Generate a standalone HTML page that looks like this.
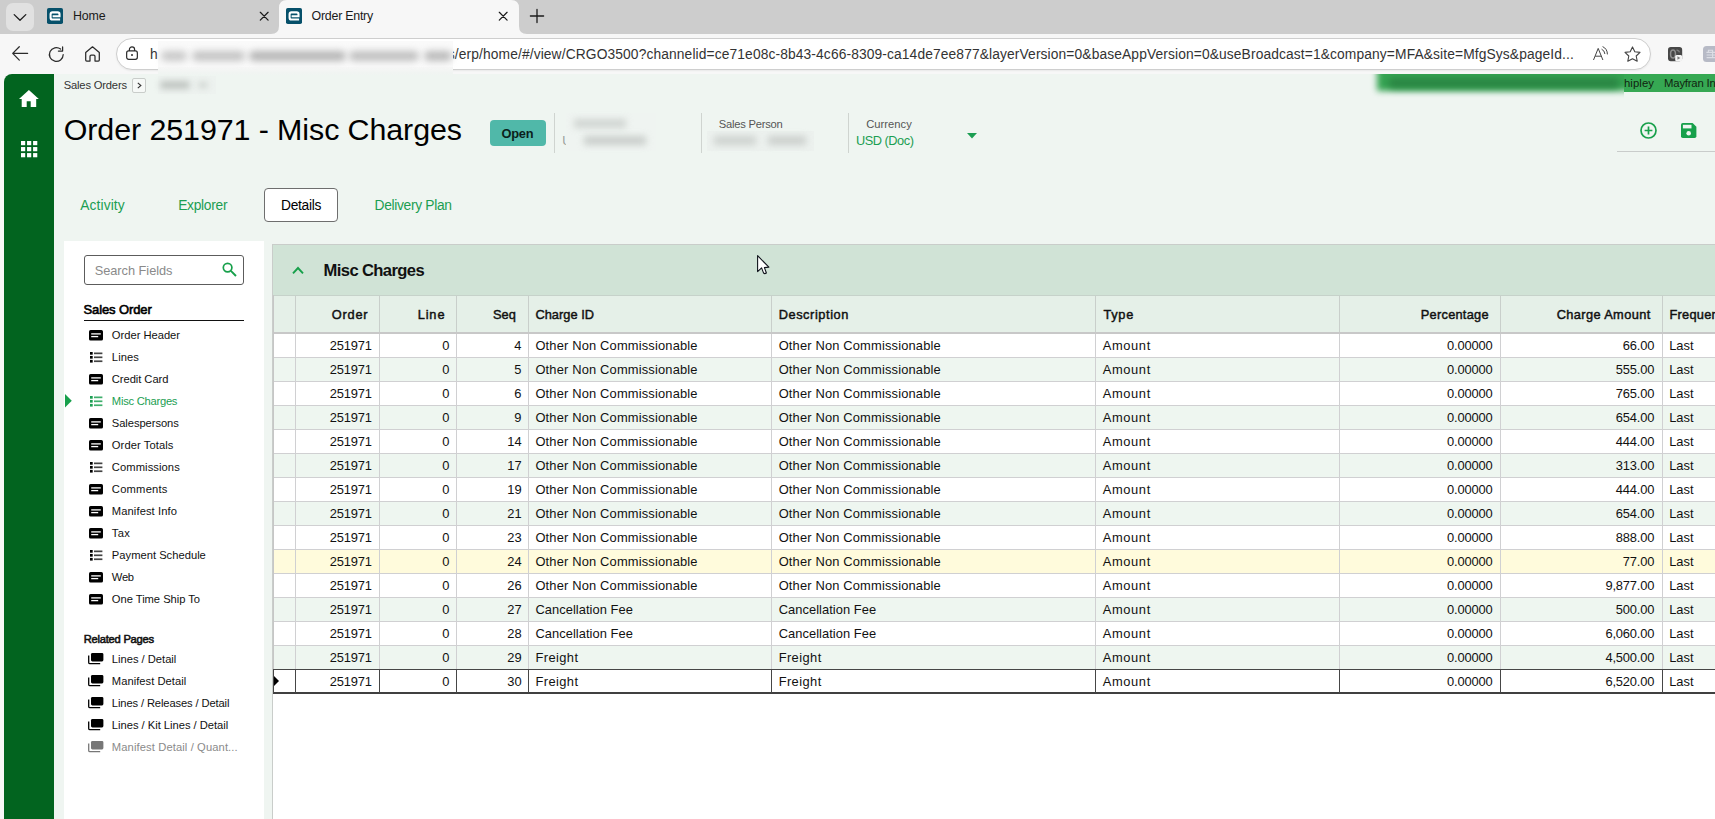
<!DOCTYPE html><html lang="en"><head><meta charset="utf-8"><title>Order Entry</title><style>
html,body{margin:0;padding:0}
body{width:1715px;height:819px;overflow:hidden;position:relative;background:#eff5f1;font-family:'Liberation Sans',sans-serif;color:#000}
.t{position:absolute;white-space:pre;line-height:1em}
.a{position:absolute}
svg{position:absolute;overflow:visible}
</style></head><body>
<div class="a" id="tabbar" style="left:0;top:0;width:1715px;height:34px;background:#cdcdcd"></div>
<div class="a" id="toolbar" style="left:0;top:34px;width:1715px;height:40px;background:#f7f7f7"></div>
<div class="a" style="left:0;top:74px;width:4px;height:745px;background:#f7f7f7"></div>
<div class="a" style="left:6px;top:3px;width:28px;height:28px;border-radius:7px;background:#e1e1e1"></div>
<svg style="left:13px;top:13px" width="14" height="9" viewBox="0 0 14 9"><path d="M1.2 1.6 L7 7.2 L12.8 1.6" fill="none" stroke="#1b1b1b" stroke-width="1.3" stroke-linecap="round" stroke-linejoin="round"/></svg>
<svg style="left:271px;top:0" width="256" height="34" viewBox="0 0 256 34"><path d="M0 34 Q8 34 8 26 L8 8 Q8 0 16 0 L240 0 Q248 0 248 8 L248 26 Q248 34 256 34 Z" fill="#f7f7f7"/></svg>
<svg style="left:47px;top:8px" width="16" height="16" viewBox="0 0 16 16"><rect width="16" height="16" rx="1.8" fill="#06506a"/><path d="M5.6 8.2 H12.5 V6.2 Q12.5 4.4 10.7 4.4 H5.4 Q3.6 4.4 3.6 6.2 V9.7 Q3.6 11.5 5.4 11.5 H13.1" fill="none" stroke="#fff" stroke-width="2.1"/></svg>
<svg style="left:286px;top:8px" width="16" height="16" viewBox="0 0 16 16"><rect width="16" height="16" rx="1.8" fill="#06506a"/><path d="M5.6 8.2 H12.5 V6.2 Q12.5 4.4 10.7 4.4 H5.4 Q3.6 4.4 3.6 6.2 V9.7 Q3.6 11.5 5.4 11.5 H13.1" fill="none" stroke="#fff" stroke-width="2.1"/></svg>
<span class="t" style="left:72.96px;top:10.20px;font-size:12.4px;color:#1a1a1a;letter-spacing:-0.107px;">Home</span>
<span class="t" style="left:311.56px;top:10.10px;font-size:12.4px;color:#1a1a1a;letter-spacing:-0.241px;">Order Entry</span>
<svg style="left:260.3px;top:12.2px" width="8.4" height="8.4" viewBox="0 0 8.4 8.4"><path d="M0.3 0.3 L8.1 8.1 M8.1 0.3 L0.3 8.1" stroke="#1b1b1b" stroke-width="1.25" stroke-linecap="round"/></svg>
<svg style="left:499.40000000000003px;top:12.2px" width="8.4" height="8.4" viewBox="0 0 8.4 8.4"><path d="M0.3 0.3 L8.1 8.1 M8.1 0.3 L0.3 8.1" stroke="#1b1b1b" stroke-width="1.25" stroke-linecap="round"/></svg>
<svg style="left:529.5px;top:8.7px" width="14" height="14" viewBox="0 0 14 14"><path d="M7 0.4 V13.6 M0.4 7 H13.6" stroke="#1b1b1b" stroke-width="1.3" stroke-linecap="round"/></svg>
<svg style="left:12px;top:46px" width="16" height="15" viewBox="0 0 16 15"><path d="M7.3 0.7 L0.7 7.4 L7.3 14.1 M0.9 7.4 H15.6" fill="none" stroke="#2b2b2b" stroke-width="1.25" stroke-linecap="round" stroke-linejoin="round"/></svg>
<svg style="left:47.5px;top:45.5px" width="17" height="17" viewBox="0 0 17 17"><path d="M15.2 8.5 A6.9 6.9 0 1 1 12.6 3.1 M14.6 0.9 V5.1 H10.4" fill="none" stroke="#2b2b2b" stroke-width="1.25" stroke-linecap="round" stroke-linejoin="round"/></svg>
<svg style="left:84.5px;top:45.6px" width="15" height="16" viewBox="0 0 15 16"><path d="M0.7 6.6 L7.5 0.8 L14.3 6.6 V14 Q14.3 15 13.3 15 H10 V10.4 Q10 9.2 8.8 9.2 H6.2 Q5 9.2 5 10.4 V15 H1.7 Q0.7 15 0.7 14 Z" fill="none" stroke="#2b2b2b" stroke-width="1.25" stroke-linejoin="round"/></svg>
<div class="a" id="omnibox" style="left:116px;top:38px;width:1535px;height:32px;box-sizing:border-box;border:1px solid #cecece;border-radius:16px;background:#fff;box-shadow:0 1px 2px rgba(0,0,0,.06)"></div>
<svg style="left:126px;top:46px" width="12" height="14" viewBox="0 0 12 14"><rect x="0.65" y="4.9" width="10.7" height="8.4" rx="2" fill="none" stroke="#2b2b2b" stroke-width="1.2"/><path d="M3.4 4.9 V3.4 A2.6 2.6 0 0 1 8.6 3.4 V4.9" fill="none" stroke="#2b2b2b" stroke-width="1.2"/><circle cx="6" cy="9.1" r="1" fill="#2b2b2b"/></svg>
<span class="t" style="left:149.97px;top:47.92px;font-size:13.8px;color:#333;">h</span>
<span class="t" style="left:447.77px;top:47.92px;font-size:13.8px;color:#333;letter-spacing:0.116px;">s/erp/home/#/view/CRGO3500?channelid=ce71e08c-8b43-4c66-8309-ca14de7ee877&amp;layerVersion=0&amp;baseAppVersion=0&amp;useBroadcast=1&amp;company=MFA&amp;site=MfgSys&amp;pageId...</span>
<div class="a" style="left:158px;top:41px;width:295px;height:28px;background:#fafafa"></div>
<div class="a" style="left:158px;top:67px;width:295px;height:9px;background:linear-gradient(#f7f7f7,#f1f4f2 60%,#eff5f1)"></div>
<div class="a" style="left:161px;top:50.5px;width:26px;height:10px;border-radius:5px;background:#c9c9c9;filter:blur(3.5px)"></div>
<div class="a" style="left:192px;top:50.5px;width:53px;height:10px;border-radius:5px;background:#c4c4c4;filter:blur(3.5px)"></div>
<div class="a" style="left:249px;top:50.5px;width:97px;height:10px;border-radius:5px;background:#b6b6b6;filter:blur(3.5px)"></div>
<div class="a" style="left:349px;top:50.5px;width:70px;height:10px;border-radius:5px;background:#c0c0c0;filter:blur(3.5px)"></div>
<div class="a" style="left:424px;top:50.5px;width:28px;height:10px;border-radius:5px;background:#bbbbbb;filter:blur(3.5px)"></div>
<svg style="left:1593px;top:46px" width="16" height="15" viewBox="0 0 16 15"><path d="M0.5 14 L5.2 2.4 L9.9 14 M2.2 10.2 H8.2" fill="none" stroke="#444" stroke-width="1" stroke-linejoin="round"/><path d="M8.6 3.2 Q11.6 4.6 11.9 8 M9.6 0.6 Q14.4 2.8 14.4 8.4" fill="none" stroke="#444" stroke-width="1"/></svg>
<svg style="left:1623.9px;top:46px" width="17" height="16" viewBox="0 0 17 16"><path d="M8.5 0.9 L10.8 5.7 L16 6.4 L12.2 10 L13.2 15.2 L8.5 12.7 L3.8 15.2 L4.8 10 L1 6.4 L6.2 5.7 Z" fill="none" stroke="#444" stroke-width="1.1" stroke-linejoin="round"/></svg>
<svg style="left:1667.9px;top:46.9px" width="14.2" height="14.2" viewBox="0 0 15 15"><rect width="15" height="15" rx="3" fill="#474747"/><ellipse cx="5.3" cy="7.4" rx="2.6" ry="4.2" fill="none" stroke="#8e8e8e" stroke-width="1.6"/><path d="M9 3.4 Q11.6 3 12.2 5.6" fill="none" stroke="#7c7c7c" stroke-width="1.5"/><rect x="7.6" y="8.4" width="7.4" height="6.6" rx="1.6" fill="#f4f4f4"/><path d="M10 9.8 L13 11.6 L10 13.4Z" fill="#7a7a7a"/></svg>
<svg style="left:1703px;top:46px" width="12" height="16" viewBox="0 0 12 16"><path d="M12 0 H3.5 Q0 0 0 3.5 V12.5 Q0 16 3.5 16 H12Z" fill="#b7bac6"/><path d="M5.4 6.2 V4.2 H9.6 V6.2 M3.4 6.4 H12 M3.6 9 H12 M3.6 11.6 H12 M9.6 6.4 V11.6" stroke="#dcdee5" stroke-width="1.1" fill="none"/></svg>
<div class="a" style="left:4px;top:74px;width:9px;height:9px;background:#f7f7f7"></div>
<div class="a" id="sidebar" style="left:4px;top:74px;width:50px;height:745px;background:#02641f;border-top-left-radius:8px"></div>
<svg style="left:19.2px;top:89.9px" width="19.8" height="17" viewBox="0 0 19.8 17"><path d="M9.9 0 L0 9 H2.7 V17 H7.7 V11.3 H11.7 V17 H17.2 V9 H19.8 Z" fill="#fff"/></svg>
<svg style="left:20.8px;top:141px" width="16.3" height="16.3" viewBox="0 0 16.3 16.3"><rect x="0.00" y="0.00" width="4.2" height="4.2" fill="#fff"/><rect x="0.00" y="6.04" width="4.2" height="4.2" fill="#fff"/><rect x="0.00" y="12.08" width="4.2" height="4.2" fill="#fff"/><rect x="6.04" y="0.00" width="4.2" height="4.2" fill="#fff"/><rect x="6.04" y="6.04" width="4.2" height="4.2" fill="#fff"/><rect x="6.04" y="12.08" width="4.2" height="4.2" fill="#fff"/><rect x="12.08" y="0.00" width="4.2" height="4.2" fill="#fff"/><rect x="12.08" y="6.04" width="4.2" height="4.2" fill="#fff"/><rect x="12.08" y="12.08" width="4.2" height="4.2" fill="#fff"/></svg>
<span class="t" style="left:63.73px;top:80.22px;font-size:11.2px;color:#333;letter-spacing:-0.180px;">Sales Orders</span>
<div class="a" style="left:132px;top:78px;width:14px;height:15px;box-sizing:border-box;border:1px solid #c9cdca;border-radius:2px;background:#f6f9f7"></div>
<svg style="left:136.6px;top:82.4px" width="5" height="7" viewBox="0 0 5 7"><path d="M0.8 0.8 L3.9 3.5 L0.8 6.2" fill="none" stroke="#333" stroke-width="1.1"/></svg>
<div class="a" style="left:158px;top:76px;width:58px;height:18px;background:#edf2ef"></div>
<div class="a" style="left:160px;top:80.5px;width:30px;height:8px;border-radius:4px;background:#bfc4c0;filter:blur(3.2px)"></div>
<div class="a" style="left:198px;top:82px;width:10px;height:6px;border-radius:3px;background:#cfd4d0;filter:blur(3px)"></div>
<div class="a" id="banner" style="left:1624px;top:74px;width:91px;height:18px;background:#36a853"></div>
<div class="a" style="left:1366px;top:74px;width:258px;height:28px;overflow:hidden"><div class="a" style="left:11px;top:-8px;width:270px;height:25px;background:#35a452;filter:blur(3px)"></div><div class="a" style="left:22px;top:4px;width:232px;height:10px;border-radius:5px;background:#2a8443;filter:blur(3.5px)"></div></div>
<span class="t" style="left:1623.92px;top:78.03px;font-size:11.3px;color:#10230f;letter-spacing:0.100px;">hipley</span>
<span class="t" style="left:1664.12px;top:78.03px;font-size:11.3px;color:#10230f;letter-spacing:-0.2px;">Mayfran Inc</span>
<span class="t" style="left:63.78px;top:113.97px;font-size:30.4px;letter-spacing:-0.080px;">Order 251971 - Misc Charges</span>
<div class="a" style="left:490px;top:120px;width:56px;height:26px;border-radius:4px;background:#50b8a9"></div>
<span class="t" style="left:501.53px;top:128.16px;font-size:12.8px;font-weight:700;color:#0b1f1c;letter-spacing:-0.246px;">Open</span>
<div class="a" style="left:554px;top:113px;width:1px;height:40px;background:#cfd4d0"></div>
<div class="a" style="left:701px;top:113px;width:1px;height:40px;background:#cfd4d0"></div>
<div class="a" style="left:848px;top:113px;width:1px;height:40px;background:#cfd4d0"></div>
<span class="t" style="left:562.25px;top:135.22px;font-size:12.5px;color:#9aa09c;">U</span>
<div class="a" style="left:566px;top:113px;width:90px;height:38px;background:#eff4f1"></div>
<div class="a" style="left:574px;top:119px;width:52px;height:9px;background:#c9cdca;filter:blur(3.5px);opacity:.8"></div>
<div class="a" style="left:584px;top:136px;width:62px;height:9px;background:#c3c7c4;filter:blur(3.5px);opacity:.85"></div>
<span class="t" style="left:718.83px;top:119.32px;font-size:11.2px;color:#555;letter-spacing:-0.230px;">Sales Person</span>
<div class="a" style="left:707px;top:131px;width:107px;height:20px;background:#ecf1ee"></div>
<div class="a" style="left:714px;top:136px;width:42px;height:9px;background:#c9cdca;filter:blur(3.5px);opacity:.85"></div>
<div class="a" style="left:768px;top:136px;width:38px;height:9px;background:#c6cac7;filter:blur(3.5px);opacity:.85"></div>
<span class="t" style="left:866.13px;top:119.32px;font-size:11.2px;color:#555;letter-spacing:0.047px;">Currency</span>
<span class="t" style="left:856.03px;top:134.96px;font-size:12.8px;color:#1b9e52;letter-spacing:-0.497px;">USD (Doc)</span>
<svg style="left:966.5px;top:133px" width="10" height="5.4" viewBox="0 0 10 5.4"><path d="M0 0 H10 L5 5.4Z" fill="#1b9e52"/></svg>
<svg style="left:1640.3px;top:122px" width="17" height="17" viewBox="0 0 17 17"><circle cx="8.5" cy="8.5" r="7.5" fill="none" stroke="#17a04b" stroke-width="1.7"/><path d="M8.5 4.6 V12.4 M4.6 8.5 H12.4" stroke="#17a04b" stroke-width="1.7"/></svg>
<svg style="left:1681.3px;top:123.2px" width="15.4" height="15" viewBox="0 0 15.4 15"><path d="M1.8 0 H11.6 L15.4 3.8 V13.2 Q15.4 15 13.6 15 H1.8 Q0 15 0 13.2 V1.8 Q0 0 1.8 0Z" fill="#17a04b"/><rect x="1.9" y="1.8" width="8.6" height="3.6" fill="#eff5f1"/><circle cx="7.7" cy="10.2" r="2.3" fill="#eff5f1"/></svg>
<div class="a" style="left:1617px;top:151px;width:98px;height:1px;background:#c9cccb"></div>
<span class="t" style="left:80.17px;top:199.12px;font-size:13.8px;color:#1b9e52;letter-spacing:0.125px;">Activity</span>
<span class="t" style="left:178.17px;top:199.12px;font-size:13.8px;color:#1b9e52;letter-spacing:-0.285px;">Explorer</span>
<div class="a" style="left:264px;top:188px;width:74px;height:34px;box-sizing:border-box;border:1px solid #6e6e6e;border-radius:4px;background:#fff"></div>
<span class="t" style="left:280.97px;top:199.12px;font-size:13.8px;letter-spacing:-0.301px;">Details</span>
<span class="t" style="left:374.57px;top:199.12px;font-size:13.8px;color:#1b9e52;letter-spacing:-0.325px;">Delivery Plan</span>
<div class="a" id="nav" style="left:64px;top:241px;width:200px;height:578px;background:#fff"></div>
<div class="a" style="left:84px;top:255px;width:160px;height:30px;box-sizing:border-box;border:1px solid #5c5c5c;border-radius:3px;background:#fff"></div>
<span class="t" style="left:94.73px;top:264.56px;font-size:12.8px;color:#8a8a8a;letter-spacing:-0.039px;">Search Fields</span>
<svg style="left:222px;top:261.6px" width="15" height="15" viewBox="0 0 15 15"><circle cx="5.6" cy="5.6" r="4.3" fill="none" stroke="#17a04b" stroke-width="1.7"/><path d="M8.9 8.9 L14 14" stroke="#17a04b" stroke-width="1.9"/></svg>
<span class="t" style="left:83.52px;top:303.00px;font-size:13px;letter-spacing:-0.107px;-webkit-text-stroke:0.6px #000;">Sales Order</span>
<div class="a" style="left:84px;top:319.6px;width:160px;height:1.4px;background:#111"></div>
<svg style="left:89.1px;top:329.7px" width="14" height="10.6" viewBox="0 0 14 10.6"><rect width="14" height="10.6" rx="1.6" fill="#000"/><path d="M2.2 3.9 H11.8" stroke="#fff" stroke-width="1.3"/><path d="M2.2 6.6 H9.2" stroke="#fff" stroke-width="1.3"/></svg>
<span class="t" style="left:111.83px;top:330.12px;font-size:11.2px;color:#111;letter-spacing:-0.017px;">Order Header</span>
<svg style="left:89.9px;top:351.8px" width="12.4" height="10.6" viewBox="0 0 12.4 10.6"><rect x="0" y="0.00" width="2.7" height="2.7" fill="#000"/><rect x="4" y="0.50" width="8.4" height="1.7" fill="#444"/><rect x="0" y="3.95" width="2.7" height="2.7" fill="#000"/><rect x="4" y="4.45" width="8.4" height="1.7" fill="#444"/><rect x="0" y="7.90" width="2.7" height="2.7" fill="#000"/><rect x="4" y="8.40" width="8.4" height="1.7" fill="#444"/></svg>
<span class="t" style="left:111.83px;top:352.12px;font-size:11.2px;color:#111;letter-spacing:0.093px;">Lines</span>
<svg style="left:89.1px;top:373.7px" width="14" height="10.6" viewBox="0 0 14 10.6"><rect width="14" height="10.6" rx="1.6" fill="#000"/><path d="M2.2 3.9 H11.8" stroke="#fff" stroke-width="1.3"/><path d="M2.2 6.6 H9.2" stroke="#fff" stroke-width="1.3"/></svg>
<span class="t" style="left:111.83px;top:374.12px;font-size:11.2px;color:#111;letter-spacing:-0.058px;">Credit Card</span>
<svg style="left:89.9px;top:395.8px" width="12.4" height="10.6" viewBox="0 0 12.4 10.6"><rect x="0" y="0.00" width="2.7" height="2.7" fill="#1b9e52"/><rect x="4" y="0.50" width="8.4" height="1.7" fill="#3fae6c"/><rect x="0" y="3.95" width="2.7" height="2.7" fill="#1b9e52"/><rect x="4" y="4.45" width="8.4" height="1.7" fill="#3fae6c"/><rect x="0" y="7.90" width="2.7" height="2.7" fill="#1b9e52"/><rect x="4" y="8.40" width="8.4" height="1.7" fill="#3fae6c"/></svg>
<span class="t" style="left:111.83px;top:396.12px;font-size:11.2px;color:#1b9e52;letter-spacing:-0.252px;">Misc Charges</span>
<svg style="left:89.1px;top:417.7px" width="14" height="10.6" viewBox="0 0 14 10.6"><rect width="14" height="10.6" rx="1.6" fill="#000"/><path d="M2.2 3.9 H11.8" stroke="#fff" stroke-width="1.3"/><path d="M2.2 6.6 H9.2" stroke="#fff" stroke-width="1.3"/></svg>
<span class="t" style="left:111.83px;top:418.12px;font-size:11.2px;color:#111;letter-spacing:-0.071px;">Salespersons</span>
<svg style="left:89.1px;top:439.7px" width="14" height="10.6" viewBox="0 0 14 10.6"><rect width="14" height="10.6" rx="1.6" fill="#000"/><path d="M2.2 3.9 H11.8" stroke="#fff" stroke-width="1.3"/><path d="M2.2 6.6 H9.2" stroke="#fff" stroke-width="1.3"/></svg>
<span class="t" style="left:111.83px;top:440.12px;font-size:11.2px;color:#111;letter-spacing:0.081px;">Order Totals</span>
<svg style="left:89.9px;top:461.8px" width="12.4" height="10.6" viewBox="0 0 12.4 10.6"><rect x="0" y="0.00" width="2.7" height="2.7" fill="#000"/><rect x="4" y="0.50" width="8.4" height="1.7" fill="#444"/><rect x="0" y="3.95" width="2.7" height="2.7" fill="#000"/><rect x="4" y="4.45" width="8.4" height="1.7" fill="#444"/><rect x="0" y="7.90" width="2.7" height="2.7" fill="#000"/><rect x="4" y="8.40" width="8.4" height="1.7" fill="#444"/></svg>
<span class="t" style="left:111.83px;top:462.12px;font-size:11.2px;color:#111;letter-spacing:0.078px;">Commissions</span>
<svg style="left:89.1px;top:483.7px" width="14" height="10.6" viewBox="0 0 14 10.6"><rect width="14" height="10.6" rx="1.6" fill="#000"/><path d="M2.2 3.9 H11.8" stroke="#fff" stroke-width="1.3"/><path d="M2.2 6.6 H9.2" stroke="#fff" stroke-width="1.3"/></svg>
<span class="t" style="left:111.83px;top:484.12px;font-size:11.2px;color:#111;letter-spacing:0.218px;">Comments</span>
<svg style="left:89.1px;top:505.7px" width="14" height="10.6" viewBox="0 0 14 10.6"><rect width="14" height="10.6" rx="1.6" fill="#000"/><path d="M2.2 3.9 H11.8" stroke="#fff" stroke-width="1.3"/><path d="M2.2 6.6 H9.2" stroke="#fff" stroke-width="1.3"/></svg>
<span class="t" style="left:111.83px;top:506.12px;font-size:11.2px;color:#111;letter-spacing:0.088px;">Manifest Info</span>
<svg style="left:89.1px;top:527.7px" width="14" height="10.6" viewBox="0 0 14 10.6"><rect width="14" height="10.6" rx="1.6" fill="#000"/><path d="M2.2 3.9 H11.8" stroke="#fff" stroke-width="1.3"/><path d="M2.2 6.6 H9.2" stroke="#fff" stroke-width="1.3"/></svg>
<span class="t" style="left:111.83px;top:528.12px;font-size:11.2px;color:#111;letter-spacing:0.349px;">Tax</span>
<svg style="left:89.9px;top:549.8px" width="12.4" height="10.6" viewBox="0 0 12.4 10.6"><rect x="0" y="0.00" width="2.7" height="2.7" fill="#000"/><rect x="4" y="0.50" width="8.4" height="1.7" fill="#444"/><rect x="0" y="3.95" width="2.7" height="2.7" fill="#000"/><rect x="4" y="4.45" width="8.4" height="1.7" fill="#444"/><rect x="0" y="7.90" width="2.7" height="2.7" fill="#000"/><rect x="4" y="8.40" width="8.4" height="1.7" fill="#444"/></svg>
<span class="t" style="left:111.83px;top:550.12px;font-size:11.2px;color:#111;letter-spacing:0.007px;">Payment Schedule</span>
<svg style="left:89.1px;top:571.7px" width="14" height="10.6" viewBox="0 0 14 10.6"><rect width="14" height="10.6" rx="1.6" fill="#000"/><path d="M2.2 3.9 H11.8" stroke="#fff" stroke-width="1.3"/><path d="M2.2 6.6 H9.2" stroke="#fff" stroke-width="1.3"/></svg>
<span class="t" style="left:111.83px;top:572.12px;font-size:11.2px;color:#111;letter-spacing:-0.296px;">Web</span>
<svg style="left:89.1px;top:593.7px" width="14" height="10.6" viewBox="0 0 14 10.6"><rect width="14" height="10.6" rx="1.6" fill="#000"/><path d="M2.2 3.9 H11.8" stroke="#fff" stroke-width="1.3"/><path d="M2.2 6.6 H9.2" stroke="#fff" stroke-width="1.3"/></svg>
<span class="t" style="left:111.83px;top:594.12px;font-size:11.2px;color:#111;letter-spacing:-0.033px;">One Time Ship To</span>
<svg style="left:65.2px;top:394.3px" width="6.8" height="13.4" viewBox="0 0 6.8 13.4"><path d="M0 0 L6.8 6.7 L0 13.4Z" fill="#17a04b"/></svg>
<span class="t" style="left:83.73px;top:634.12px;font-size:11.2px;color:#111;letter-spacing:-0.249px;-webkit-text-stroke:0.55px #111;">Related Pages</span>
<svg style="left:88.4px;top:653.3px" width="15.4" height="11.4" viewBox="0 0 15.4 11.4"><rect x="3" y="0" width="12.4" height="8.4" rx="1.4" fill="#000"/><path d="M0.7 2.6 V9.4 Q0.7 10.7 2 10.7 H12.2" fill="none" stroke="#000" stroke-width="1.3"/></svg>
<span class="t" style="left:111.83px;top:654.02px;font-size:11.2px;color:#111;letter-spacing:-0.013px;">Lines / Detail</span>
<svg style="left:88.4px;top:675.3px" width="15.4" height="11.4" viewBox="0 0 15.4 11.4"><rect x="3" y="0" width="12.4" height="8.4" rx="1.4" fill="#000"/><path d="M0.7 2.6 V9.4 Q0.7 10.7 2 10.7 H12.2" fill="none" stroke="#000" stroke-width="1.3"/></svg>
<span class="t" style="left:111.83px;top:676.02px;font-size:11.2px;color:#111;letter-spacing:0.030px;">Manifest Detail</span>
<svg style="left:88.4px;top:697.3px" width="15.4" height="11.4" viewBox="0 0 15.4 11.4"><rect x="3" y="0" width="12.4" height="8.4" rx="1.4" fill="#000"/><path d="M0.7 2.6 V9.4 Q0.7 10.7 2 10.7 H12.2" fill="none" stroke="#000" stroke-width="1.3"/></svg>
<span class="t" style="left:111.83px;top:698.02px;font-size:11.2px;color:#111;letter-spacing:-0.126px;">Lines / Releases / Detail</span>
<svg style="left:88.4px;top:719.3px" width="15.4" height="11.4" viewBox="0 0 15.4 11.4"><rect x="3" y="0" width="12.4" height="8.4" rx="1.4" fill="#000"/><path d="M0.7 2.6 V9.4 Q0.7 10.7 2 10.7 H12.2" fill="none" stroke="#000" stroke-width="1.3"/></svg>
<span class="t" style="left:111.83px;top:720.02px;font-size:11.2px;color:#111;letter-spacing:-0.019px;">Lines / Kit Lines / Detail</span>
<svg style="left:88.4px;top:741.3px" width="15.4" height="11.4" viewBox="0 0 15.4 11.4"><rect x="3" y="0" width="12.4" height="8.4" rx="1.4" fill="#777"/><path d="M0.7 2.6 V9.4 Q0.7 10.7 2 10.7 H12.2" fill="none" stroke="#777" stroke-width="1.3"/></svg>
<span class="t" style="left:111.83px;top:742.02px;font-size:11.2px;color:#8a8a8a;letter-spacing:0.108px;">Manifest Detail / Quant...</span>
<div class="a" id="card" style="left:272px;top:244px;width:1443px;height:575px;background:#fff;border-left:1px solid #c9cdca;border-top:1px solid #c9cdca;box-sizing:border-box"></div>
<div class="a" style="left:273px;top:245px;width:1442px;height:50px;background:#d0e3d6"></div>
<svg style="left:292px;top:266px" width="12" height="8.6" viewBox="0 0 12 8.6"><path d="M1 7.4 L6 2 L11 7.4" fill="none" stroke="#17a04b" stroke-width="1.9"/></svg>
<span class="t" style="left:323.60px;top:263.15px;font-size:16.6px;font-weight:700;color:#111;letter-spacing:-0.622px;">Misc Charges</span>
<div class="a" style="left:273px;top:295px;width:1442px;height:38px;background:#e5f0e8;border-top:1px solid #c6d2ca;box-sizing:border-box"></div>
<div class="a" style="left:273px;top:332px;width:1442px;height:2px;background:#c8c8c8"></div>
<div class="a" style="left:273px;top:334px;width:1442px;height:23px;background:#fff"></div>
<div class="a" style="left:273px;top:357px;width:1442px;height:1px;background:#d0d0d2"></div>
<div class="a" style="left:273px;top:358px;width:1442px;height:23px;background:#eef6f0"></div>
<div class="a" style="left:273px;top:381px;width:1442px;height:1px;background:#d0d0d2"></div>
<div class="a" style="left:273px;top:382px;width:1442px;height:23px;background:#fff"></div>
<div class="a" style="left:273px;top:405px;width:1442px;height:1px;background:#d0d0d2"></div>
<div class="a" style="left:273px;top:406px;width:1442px;height:23px;background:#eef6f0"></div>
<div class="a" style="left:273px;top:429px;width:1442px;height:1px;background:#d0d0d2"></div>
<div class="a" style="left:273px;top:430px;width:1442px;height:23px;background:#fff"></div>
<div class="a" style="left:273px;top:453px;width:1442px;height:1px;background:#d0d0d2"></div>
<div class="a" style="left:273px;top:454px;width:1442px;height:23px;background:#eef6f0"></div>
<div class="a" style="left:273px;top:477px;width:1442px;height:1px;background:#d0d0d2"></div>
<div class="a" style="left:273px;top:478px;width:1442px;height:23px;background:#fff"></div>
<div class="a" style="left:273px;top:501px;width:1442px;height:1px;background:#d0d0d2"></div>
<div class="a" style="left:273px;top:502px;width:1442px;height:23px;background:#eef6f0"></div>
<div class="a" style="left:273px;top:525px;width:1442px;height:1px;background:#d0d0d2"></div>
<div class="a" style="left:273px;top:526px;width:1442px;height:23px;background:#fff"></div>
<div class="a" style="left:273px;top:549px;width:1442px;height:1px;background:#d0d0d2"></div>
<div class="a" style="left:273px;top:550px;width:1442px;height:23px;background:#fffbdc"></div>
<div class="a" style="left:273px;top:573px;width:1442px;height:1px;background:#d0d0d2"></div>
<div class="a" style="left:273px;top:574px;width:1442px;height:23px;background:#fff"></div>
<div class="a" style="left:273px;top:597px;width:1442px;height:1px;background:#d0d0d2"></div>
<div class="a" style="left:273px;top:598px;width:1442px;height:23px;background:#eef6f0"></div>
<div class="a" style="left:273px;top:621px;width:1442px;height:1px;background:#d0d0d2"></div>
<div class="a" style="left:273px;top:622px;width:1442px;height:23px;background:#fff"></div>
<div class="a" style="left:273px;top:645px;width:1442px;height:1px;background:#d0d0d2"></div>
<div class="a" style="left:273px;top:646px;width:1442px;height:23px;background:#eef6f0"></div>
<div class="a" style="left:273px;top:669px;width:1442px;height:1px;background:#d0d0d2"></div>
<div class="a" style="left:273px;top:670px;width:1442px;height:23px;background:#fff"></div>
<div class="a" style="left:295px;top:296px;width:1px;height:36px;background:#c9cfcb"></div>
<div class="a" style="left:295px;top:334px;width:1px;height:336px;background:#d0d0d2"></div>
<div class="a" style="left:379px;top:296px;width:1px;height:36px;background:#c9cfcb"></div>
<div class="a" style="left:379px;top:334px;width:1px;height:336px;background:#d0d0d2"></div>
<div class="a" style="left:456px;top:296px;width:1px;height:36px;background:#c9cfcb"></div>
<div class="a" style="left:456px;top:334px;width:1px;height:336px;background:#d0d0d2"></div>
<div class="a" style="left:528px;top:296px;width:1px;height:36px;background:#c9cfcb"></div>
<div class="a" style="left:528px;top:334px;width:1px;height:336px;background:#d0d0d2"></div>
<div class="a" style="left:771px;top:296px;width:1px;height:36px;background:#c9cfcb"></div>
<div class="a" style="left:771px;top:334px;width:1px;height:336px;background:#d0d0d2"></div>
<div class="a" style="left:1095px;top:296px;width:1px;height:36px;background:#c9cfcb"></div>
<div class="a" style="left:1095px;top:334px;width:1px;height:336px;background:#d0d0d2"></div>
<div class="a" style="left:1339px;top:296px;width:1px;height:36px;background:#c9cfcb"></div>
<div class="a" style="left:1339px;top:334px;width:1px;height:336px;background:#d0d0d2"></div>
<div class="a" style="left:1500px;top:296px;width:1px;height:36px;background:#c9cfcb"></div>
<div class="a" style="left:1500px;top:334px;width:1px;height:336px;background:#d0d0d2"></div>
<div class="a" style="left:1662px;top:296px;width:1px;height:36px;background:#c9cfcb"></div>
<div class="a" style="left:1662px;top:334px;width:1px;height:336px;background:#d0d0d2"></div>
<div class="a" style="left:273px;top:295px;width:1px;height:375px;background:#c6c6c6"></div>
<div class="a" style="left:273px;top:669px;width:1442px;height:1px;background:#464646"></div>
<div class="a" style="left:273px;top:692px;width:1442px;height:2px;background:#404040"></div>
<div class="a" style="left:273px;top:669px;width:1px;height:24px;background:#464646"></div>
<div class="a" style="left:295px;top:669px;width:1px;height:24px;background:#464646"></div>
<div class="a" style="left:379px;top:669px;width:1px;height:24px;background:#464646"></div>
<div class="a" style="left:456px;top:669px;width:1px;height:24px;background:#464646"></div>
<div class="a" style="left:528px;top:669px;width:1px;height:24px;background:#464646"></div>
<div class="a" style="left:771px;top:669px;width:1px;height:24px;background:#464646"></div>
<div class="a" style="left:1095px;top:669px;width:1px;height:24px;background:#464646"></div>
<div class="a" style="left:1339px;top:669px;width:1px;height:24px;background:#464646"></div>
<div class="a" style="left:1500px;top:669px;width:1px;height:24px;background:#464646"></div>
<div class="a" style="left:1662px;top:669px;width:1px;height:24px;background:#464646"></div>
<svg style="left:274px;top:676.2px" width="5" height="10" viewBox="0 0 5 10"><path d="M0 0 L5 5 L0 10Z" fill="#000"/></svg>
<span class="t" style="left:331.83px;top:309.06px;font-size:12.8px;color:#111;letter-spacing:0.740px;-webkit-text-stroke:0.45px #111;">Order</span>
<span class="t" style="left:417.63px;top:309.06px;font-size:12.8px;color:#111;letter-spacing:0.892px;-webkit-text-stroke:0.45px #111;">Line</span>
<span class="t" style="left:493.03px;top:309.06px;font-size:12.8px;color:#111;letter-spacing:0.049px;-webkit-text-stroke:0.45px #111;">Seq</span>
<span class="t" style="left:535.43px;top:309.06px;font-size:12.8px;color:#111;letter-spacing:0.031px;-webkit-text-stroke:0.45px #111;">Charge ID</span>
<span class="t" style="left:778.63px;top:309.06px;font-size:12.8px;color:#111;letter-spacing:0.576px;-webkit-text-stroke:0.45px #111;">Description</span>
<span class="t" style="left:1103.43px;top:309.06px;font-size:12.8px;color:#111;letter-spacing:0.710px;-webkit-text-stroke:0.45px #111;">Type</span>
<span class="t" style="left:1420.83px;top:309.06px;font-size:12.8px;color:#111;letter-spacing:0.247px;-webkit-text-stroke:0.45px #111;">Percentage</span>
<span class="t" style="left:1556.73px;top:309.06px;font-size:12.8px;color:#111;letter-spacing:0.379px;-webkit-text-stroke:0.45px #111;">Charge Amount</span>
<span class="t" style="left:1669.53px;top:309.06px;font-size:12.8px;color:#111;letter-spacing:0.251px;-webkit-text-stroke:0.45px #111;">Frequency</span>
<span class="t" style="left:329.83px;top:339.78px;font-size:12.9px;color:#111;letter-spacing:-0.165px;">251971</span>
<span class="t" style="left:442.13px;top:339.78px;font-size:12.9px;color:#111;">0</span>
<span class="t" style="left:514.18px;top:339.78px;font-size:12.9px;color:#111;">4</span>
<span class="t" style="left:535.43px;top:339.78px;font-size:12.9px;color:#111;letter-spacing:0.163px;">Other Non Commissionable</span>
<span class="t" style="left:778.63px;top:339.78px;font-size:12.9px;color:#111;letter-spacing:0.163px;">Other Non Commissionable</span>
<span class="t" style="left:1102.83px;top:339.78px;font-size:12.9px;color:#111;letter-spacing:0.591px;">Amount</span>
<span class="t" style="left:1446.93px;top:339.78px;font-size:12.9px;color:#111;letter-spacing:-0.137px;">0.00000</span>
<span class="t" style="left:1622.73px;top:339.78px;font-size:12.9px;color:#111;letter-spacing:-0.144px;">66.00</span>
<span class="t" style="left:1669.23px;top:339.78px;font-size:12.9px;color:#111;letter-spacing:-0.028px;">Last</span>
<span class="t" style="left:329.83px;top:363.78px;font-size:12.9px;color:#111;letter-spacing:-0.165px;">251971</span>
<span class="t" style="left:442.13px;top:363.78px;font-size:12.9px;color:#111;">0</span>
<span class="t" style="left:514.18px;top:363.78px;font-size:12.9px;color:#111;">5</span>
<span class="t" style="left:535.43px;top:363.78px;font-size:12.9px;color:#111;letter-spacing:0.163px;">Other Non Commissionable</span>
<span class="t" style="left:778.63px;top:363.78px;font-size:12.9px;color:#111;letter-spacing:0.163px;">Other Non Commissionable</span>
<span class="t" style="left:1102.83px;top:363.78px;font-size:12.9px;color:#111;letter-spacing:0.591px;">Amount</span>
<span class="t" style="left:1446.93px;top:363.78px;font-size:12.9px;color:#111;letter-spacing:-0.137px;">0.00000</span>
<span class="t" style="left:1615.78px;top:363.78px;font-size:12.9px;color:#111;letter-spacing:-0.160px;">555.00</span>
<span class="t" style="left:1669.23px;top:363.78px;font-size:12.9px;color:#111;letter-spacing:-0.028px;">Last</span>
<span class="t" style="left:329.83px;top:387.78px;font-size:12.9px;color:#111;letter-spacing:-0.165px;">251971</span>
<span class="t" style="left:442.13px;top:387.78px;font-size:12.9px;color:#111;">0</span>
<span class="t" style="left:514.18px;top:387.78px;font-size:12.9px;color:#111;">6</span>
<span class="t" style="left:535.43px;top:387.78px;font-size:12.9px;color:#111;letter-spacing:0.163px;">Other Non Commissionable</span>
<span class="t" style="left:778.63px;top:387.78px;font-size:12.9px;color:#111;letter-spacing:0.163px;">Other Non Commissionable</span>
<span class="t" style="left:1102.83px;top:387.78px;font-size:12.9px;color:#111;letter-spacing:0.591px;">Amount</span>
<span class="t" style="left:1446.93px;top:387.78px;font-size:12.9px;color:#111;letter-spacing:-0.137px;">0.00000</span>
<span class="t" style="left:1615.78px;top:387.78px;font-size:12.9px;color:#111;letter-spacing:-0.160px;">765.00</span>
<span class="t" style="left:1669.23px;top:387.78px;font-size:12.9px;color:#111;letter-spacing:-0.028px;">Last</span>
<span class="t" style="left:329.83px;top:411.78px;font-size:12.9px;color:#111;letter-spacing:-0.165px;">251971</span>
<span class="t" style="left:442.13px;top:411.78px;font-size:12.9px;color:#111;">0</span>
<span class="t" style="left:514.18px;top:411.78px;font-size:12.9px;color:#111;">9</span>
<span class="t" style="left:535.43px;top:411.78px;font-size:12.9px;color:#111;letter-spacing:0.163px;">Other Non Commissionable</span>
<span class="t" style="left:778.63px;top:411.78px;font-size:12.9px;color:#111;letter-spacing:0.163px;">Other Non Commissionable</span>
<span class="t" style="left:1102.83px;top:411.78px;font-size:12.9px;color:#111;letter-spacing:0.591px;">Amount</span>
<span class="t" style="left:1446.93px;top:411.78px;font-size:12.9px;color:#111;letter-spacing:-0.137px;">0.00000</span>
<span class="t" style="left:1615.78px;top:411.78px;font-size:12.9px;color:#111;letter-spacing:-0.160px;">654.00</span>
<span class="t" style="left:1669.23px;top:411.78px;font-size:12.9px;color:#111;letter-spacing:-0.028px;">Last</span>
<span class="t" style="left:329.83px;top:435.78px;font-size:12.9px;color:#111;letter-spacing:-0.165px;">251971</span>
<span class="t" style="left:442.13px;top:435.78px;font-size:12.9px;color:#111;">0</span>
<span class="t" style="left:507.23px;top:435.78px;font-size:12.9px;color:#111;letter-spacing:0.046px;">14</span>
<span class="t" style="left:535.43px;top:435.78px;font-size:12.9px;color:#111;letter-spacing:0.163px;">Other Non Commissionable</span>
<span class="t" style="left:778.63px;top:435.78px;font-size:12.9px;color:#111;letter-spacing:0.163px;">Other Non Commissionable</span>
<span class="t" style="left:1102.83px;top:435.78px;font-size:12.9px;color:#111;letter-spacing:0.591px;">Amount</span>
<span class="t" style="left:1446.93px;top:435.78px;font-size:12.9px;color:#111;letter-spacing:-0.137px;">0.00000</span>
<span class="t" style="left:1615.78px;top:435.78px;font-size:12.9px;color:#111;letter-spacing:-0.160px;">444.00</span>
<span class="t" style="left:1669.23px;top:435.78px;font-size:12.9px;color:#111;letter-spacing:-0.028px;">Last</span>
<span class="t" style="left:329.83px;top:459.78px;font-size:12.9px;color:#111;letter-spacing:-0.165px;">251971</span>
<span class="t" style="left:442.13px;top:459.78px;font-size:12.9px;color:#111;">0</span>
<span class="t" style="left:507.23px;top:459.78px;font-size:12.9px;color:#111;letter-spacing:0.046px;">17</span>
<span class="t" style="left:535.43px;top:459.78px;font-size:12.9px;color:#111;letter-spacing:0.163px;">Other Non Commissionable</span>
<span class="t" style="left:778.63px;top:459.78px;font-size:12.9px;color:#111;letter-spacing:0.163px;">Other Non Commissionable</span>
<span class="t" style="left:1102.83px;top:459.78px;font-size:12.9px;color:#111;letter-spacing:0.591px;">Amount</span>
<span class="t" style="left:1446.93px;top:459.78px;font-size:12.9px;color:#111;letter-spacing:-0.137px;">0.00000</span>
<span class="t" style="left:1615.78px;top:459.78px;font-size:12.9px;color:#111;letter-spacing:-0.160px;">313.00</span>
<span class="t" style="left:1669.23px;top:459.78px;font-size:12.9px;color:#111;letter-spacing:-0.028px;">Last</span>
<span class="t" style="left:329.83px;top:483.78px;font-size:12.9px;color:#111;letter-spacing:-0.165px;">251971</span>
<span class="t" style="left:442.13px;top:483.78px;font-size:12.9px;color:#111;">0</span>
<span class="t" style="left:507.23px;top:483.78px;font-size:12.9px;color:#111;letter-spacing:0.046px;">19</span>
<span class="t" style="left:535.43px;top:483.78px;font-size:12.9px;color:#111;letter-spacing:0.163px;">Other Non Commissionable</span>
<span class="t" style="left:778.63px;top:483.78px;font-size:12.9px;color:#111;letter-spacing:0.163px;">Other Non Commissionable</span>
<span class="t" style="left:1102.83px;top:483.78px;font-size:12.9px;color:#111;letter-spacing:0.591px;">Amount</span>
<span class="t" style="left:1446.93px;top:483.78px;font-size:12.9px;color:#111;letter-spacing:-0.137px;">0.00000</span>
<span class="t" style="left:1615.78px;top:483.78px;font-size:12.9px;color:#111;letter-spacing:-0.160px;">444.00</span>
<span class="t" style="left:1669.23px;top:483.78px;font-size:12.9px;color:#111;letter-spacing:-0.028px;">Last</span>
<span class="t" style="left:329.83px;top:507.78px;font-size:12.9px;color:#111;letter-spacing:-0.165px;">251971</span>
<span class="t" style="left:442.13px;top:507.78px;font-size:12.9px;color:#111;">0</span>
<span class="t" style="left:507.23px;top:507.78px;font-size:12.9px;color:#111;letter-spacing:0.046px;">21</span>
<span class="t" style="left:535.43px;top:507.78px;font-size:12.9px;color:#111;letter-spacing:0.163px;">Other Non Commissionable</span>
<span class="t" style="left:778.63px;top:507.78px;font-size:12.9px;color:#111;letter-spacing:0.163px;">Other Non Commissionable</span>
<span class="t" style="left:1102.83px;top:507.78px;font-size:12.9px;color:#111;letter-spacing:0.591px;">Amount</span>
<span class="t" style="left:1446.93px;top:507.78px;font-size:12.9px;color:#111;letter-spacing:-0.137px;">0.00000</span>
<span class="t" style="left:1615.78px;top:507.78px;font-size:12.9px;color:#111;letter-spacing:-0.160px;">654.00</span>
<span class="t" style="left:1669.23px;top:507.78px;font-size:12.9px;color:#111;letter-spacing:-0.028px;">Last</span>
<span class="t" style="left:329.83px;top:531.78px;font-size:12.9px;color:#111;letter-spacing:-0.165px;">251971</span>
<span class="t" style="left:442.13px;top:531.78px;font-size:12.9px;color:#111;">0</span>
<span class="t" style="left:507.23px;top:531.78px;font-size:12.9px;color:#111;letter-spacing:0.046px;">23</span>
<span class="t" style="left:535.43px;top:531.78px;font-size:12.9px;color:#111;letter-spacing:0.163px;">Other Non Commissionable</span>
<span class="t" style="left:778.63px;top:531.78px;font-size:12.9px;color:#111;letter-spacing:0.163px;">Other Non Commissionable</span>
<span class="t" style="left:1102.83px;top:531.78px;font-size:12.9px;color:#111;letter-spacing:0.591px;">Amount</span>
<span class="t" style="left:1446.93px;top:531.78px;font-size:12.9px;color:#111;letter-spacing:-0.137px;">0.00000</span>
<span class="t" style="left:1615.78px;top:531.78px;font-size:12.9px;color:#111;letter-spacing:-0.160px;">888.00</span>
<span class="t" style="left:1669.23px;top:531.78px;font-size:12.9px;color:#111;letter-spacing:-0.028px;">Last</span>
<span class="t" style="left:329.83px;top:555.78px;font-size:12.9px;color:#111;letter-spacing:-0.165px;">251971</span>
<span class="t" style="left:442.13px;top:555.78px;font-size:12.9px;color:#111;">0</span>
<span class="t" style="left:507.23px;top:555.78px;font-size:12.9px;color:#111;letter-spacing:0.046px;">24</span>
<span class="t" style="left:535.43px;top:555.78px;font-size:12.9px;color:#111;letter-spacing:0.163px;">Other Non Commissionable</span>
<span class="t" style="left:778.63px;top:555.78px;font-size:12.9px;color:#111;letter-spacing:0.163px;">Other Non Commissionable</span>
<span class="t" style="left:1102.83px;top:555.78px;font-size:12.9px;color:#111;letter-spacing:0.591px;">Amount</span>
<span class="t" style="left:1446.93px;top:555.78px;font-size:12.9px;color:#111;letter-spacing:-0.137px;">0.00000</span>
<span class="t" style="left:1622.73px;top:555.78px;font-size:12.9px;color:#111;letter-spacing:-0.144px;">77.00</span>
<span class="t" style="left:1669.23px;top:555.78px;font-size:12.9px;color:#111;letter-spacing:-0.028px;">Last</span>
<span class="t" style="left:329.83px;top:579.78px;font-size:12.9px;color:#111;letter-spacing:-0.165px;">251971</span>
<span class="t" style="left:442.13px;top:579.78px;font-size:12.9px;color:#111;">0</span>
<span class="t" style="left:507.23px;top:579.78px;font-size:12.9px;color:#111;letter-spacing:0.046px;">26</span>
<span class="t" style="left:535.43px;top:579.78px;font-size:12.9px;color:#111;letter-spacing:0.163px;">Other Non Commissionable</span>
<span class="t" style="left:778.63px;top:579.78px;font-size:12.9px;color:#111;letter-spacing:0.163px;">Other Non Commissionable</span>
<span class="t" style="left:1102.83px;top:579.78px;font-size:12.9px;color:#111;letter-spacing:0.591px;">Amount</span>
<span class="t" style="left:1446.93px;top:579.78px;font-size:12.9px;color:#111;letter-spacing:-0.137px;">0.00000</span>
<span class="t" style="left:1605.43px;top:579.78px;font-size:12.9px;color:#111;letter-spacing:-0.171px;">9,877.00</span>
<span class="t" style="left:1669.23px;top:579.78px;font-size:12.9px;color:#111;letter-spacing:-0.028px;">Last</span>
<span class="t" style="left:329.83px;top:603.78px;font-size:12.9px;color:#111;letter-spacing:-0.165px;">251971</span>
<span class="t" style="left:442.13px;top:603.78px;font-size:12.9px;color:#111;">0</span>
<span class="t" style="left:507.23px;top:603.78px;font-size:12.9px;color:#111;letter-spacing:0.046px;">27</span>
<span class="t" style="left:535.43px;top:603.78px;font-size:12.9px;color:#111;letter-spacing:0.049px;">Cancellation Fee</span>
<span class="t" style="left:778.63px;top:603.78px;font-size:12.9px;color:#111;letter-spacing:0.049px;">Cancellation Fee</span>
<span class="t" style="left:1102.83px;top:603.78px;font-size:12.9px;color:#111;letter-spacing:0.591px;">Amount</span>
<span class="t" style="left:1446.93px;top:603.78px;font-size:12.9px;color:#111;letter-spacing:-0.137px;">0.00000</span>
<span class="t" style="left:1615.78px;top:603.78px;font-size:12.9px;color:#111;letter-spacing:-0.160px;">500.00</span>
<span class="t" style="left:1669.23px;top:603.78px;font-size:12.9px;color:#111;letter-spacing:-0.028px;">Last</span>
<span class="t" style="left:329.83px;top:627.78px;font-size:12.9px;color:#111;letter-spacing:-0.165px;">251971</span>
<span class="t" style="left:442.13px;top:627.78px;font-size:12.9px;color:#111;">0</span>
<span class="t" style="left:507.23px;top:627.78px;font-size:12.9px;color:#111;letter-spacing:0.046px;">28</span>
<span class="t" style="left:535.43px;top:627.78px;font-size:12.9px;color:#111;letter-spacing:0.049px;">Cancellation Fee</span>
<span class="t" style="left:778.63px;top:627.78px;font-size:12.9px;color:#111;letter-spacing:0.049px;">Cancellation Fee</span>
<span class="t" style="left:1102.83px;top:627.78px;font-size:12.9px;color:#111;letter-spacing:0.591px;">Amount</span>
<span class="t" style="left:1446.93px;top:627.78px;font-size:12.9px;color:#111;letter-spacing:-0.137px;">0.00000</span>
<span class="t" style="left:1605.43px;top:627.78px;font-size:12.9px;color:#111;letter-spacing:-0.171px;">6,060.00</span>
<span class="t" style="left:1669.23px;top:627.78px;font-size:12.9px;color:#111;letter-spacing:-0.028px;">Last</span>
<span class="t" style="left:329.83px;top:651.78px;font-size:12.9px;color:#111;letter-spacing:-0.165px;">251971</span>
<span class="t" style="left:442.13px;top:651.78px;font-size:12.9px;color:#111;">0</span>
<span class="t" style="left:507.23px;top:651.78px;font-size:12.9px;color:#111;letter-spacing:0.046px;">29</span>
<span class="t" style="left:535.43px;top:651.78px;font-size:12.9px;color:#111;letter-spacing:0.411px;">Freight</span>
<span class="t" style="left:778.63px;top:651.78px;font-size:12.9px;color:#111;letter-spacing:0.411px;">Freight</span>
<span class="t" style="left:1102.83px;top:651.78px;font-size:12.9px;color:#111;letter-spacing:0.591px;">Amount</span>
<span class="t" style="left:1446.93px;top:651.78px;font-size:12.9px;color:#111;letter-spacing:-0.137px;">0.00000</span>
<span class="t" style="left:1605.43px;top:651.78px;font-size:12.9px;color:#111;letter-spacing:-0.171px;">4,500.00</span>
<span class="t" style="left:1669.23px;top:651.78px;font-size:12.9px;color:#111;letter-spacing:-0.028px;">Last</span>
<span class="t" style="left:329.83px;top:675.78px;font-size:12.9px;color:#111;letter-spacing:-0.165px;">251971</span>
<span class="t" style="left:442.13px;top:675.78px;font-size:12.9px;color:#111;">0</span>
<span class="t" style="left:507.23px;top:675.78px;font-size:12.9px;color:#111;letter-spacing:0.046px;">30</span>
<span class="t" style="left:535.43px;top:675.78px;font-size:12.9px;color:#111;letter-spacing:0.411px;">Freight</span>
<span class="t" style="left:778.63px;top:675.78px;font-size:12.9px;color:#111;letter-spacing:0.411px;">Freight</span>
<span class="t" style="left:1102.83px;top:675.78px;font-size:12.9px;color:#111;letter-spacing:0.591px;">Amount</span>
<span class="t" style="left:1446.93px;top:675.78px;font-size:12.9px;color:#111;letter-spacing:-0.137px;">0.00000</span>
<span class="t" style="left:1605.43px;top:675.78px;font-size:12.9px;color:#111;letter-spacing:-0.171px;">6,520.00</span>
<span class="t" style="left:1669.23px;top:675.78px;font-size:12.9px;color:#111;letter-spacing:-0.028px;">Last</span>
<svg style="left:756.7px;top:254.6px" width="13" height="20" viewBox="0 0 13 20"><path d="M0.6 0.7 V16.6 L4.6 12.9 L6.5 17.9 Q7.6 19.2 9.4 18 L7.4 12.6 L11.9 12.1 Z" fill="#fff" stroke="#10141c" stroke-width="1.1" stroke-linejoin="round"/></svg>
</body></html>
